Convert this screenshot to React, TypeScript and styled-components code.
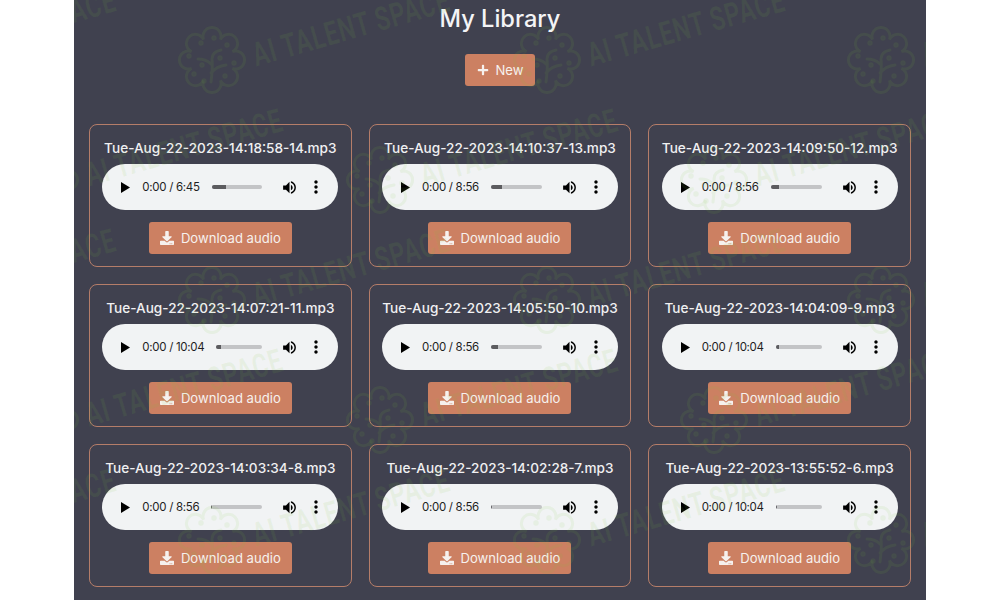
import React from "react";
import styled, { createGlobalStyle } from "styled-components";
import { FaDownload, FaPlus } from "react-icons/fa";
import { MdMoreVert, MdVolumeUp } from "react-icons/md";

const GlobalStyle = createGlobalStyle`
  html, body {
    margin: 0;
    height: 100%;
    overflow: hidden;
    background: #fff;
    font-family: Inter, "Liberation Sans", sans-serif;
  }
`;

const Page = styled.main`
  position: relative;
  box-sizing: border-box;
  width: 852px;
  height: 600px;
  margin: 0 auto;
  padding: 0 15px;
  background: #40414f;
  overflow: hidden;
`;

const Header = styled.header`
  display: flex;
  flex-direction: column;
  align-items: center;
  height: 124px;
`;

const Title = styled.h1`
  margin: 3px 0 0;
  font-size: 23.6px;
  line-height: 32px;
  font-weight: 500;
  color: #f4f4f6;
`;

const ActionButton = styled.button`
  display: flex;
  align-items: center;
  justify-content: center;
  gap: 7px;
  box-sizing: border-box;
  height: 32px;
  padding: 0 0 1px;
  border: none;
  border-radius: 3px;
  background: #cc8062;
  color: #f6f1ee;
  font-family: inherit;
  font-size: 13.1px;
  font-weight: 400;
`;

const NewButton = styled(ActionButton)`
  width: 70px;
  margin-top: 19px;
`;

const DownloadButton = styled(ActionButton)`
  width: 143px;
  margin-top: 12px;
`;

const Grid = styled.section`
  display: grid;
  grid-template-columns: repeat(3, 1fr);
  gap: 17px;
`;

const Card = styled.article`
  display: flex;
  flex-direction: column;
  align-items: center;
  box-sizing: border-box;
  height: 143px;
  padding-top: 13px;
  border: 1px solid #b57d69;
  border-radius: 8px;
`;

const FileName = styled.div`
  height: 20px;
  margin-bottom: 6px;
  font-size: 13.6px;
  line-height: 20px;
  font-weight: 500;
  color: #f0f0f2;
  white-space: nowrap;
`;

const Player = styled.div`
  display: flex;
  align-items: center;
  flex: none;
  box-sizing: border-box;
  width: 236px;
  height: 46px;
  padding-left: 19px;
  border-radius: 23px;
  background: #f1f3f4;
  color: #111;
`;

const PlayIcon = styled.svg`
  flex: none;
  width: 9px;
  height: 11px;
  margin-right: 12px;
  fill: #000;
`;

const Time = styled.span`
  flex: none;
  font-size: 11.5px;
  letter-spacing: -0.3px;
  color: #1e1e1e;
`;

const Track = styled.div`
  flex: 1;
  height: 4px;
  margin: 0 0 0 12px;
  border-radius: 2px;
  background: #c3c4c6;
  overflow: hidden;
`;

const Fill = styled.div<{ $w: number }>`
  width: ${(p) => p.$w}px;
  height: 100%;
  background: #5c5c5f;
`;

const Volume = styled(MdVolumeUp)`
  flex: none;
  width: 17px;
  height: 17px;
  margin-left: 19px;
  color: #000;
`;

const More = styled(MdMoreVert)`
  flex: none;
  width: 20px;
  height: 20px;
  margin: 0 12px 0 8px;
  color: #000;
`;

const WatermarkLayer = styled.div`
  position: absolute;
  inset: 0;
  pointer-events: none;
`;

const Mark = styled.div<{ $x: number; $y: number }>`
  position: absolute;
  left: ${(p) => p.$x}px;
  top: ${(p) => p.$y}px;
  width: 320px;
  height: 70px;
  color: rgba(125, 195, 60, 0.09);
`;

const MarkLogo = styled.svg`
  position: absolute;
  left: 0;
  top: 0;
  width: 68px;
  height: 68px;
  fill: none;
  stroke: currentColor;
  stroke-width: 3;
  stroke-linecap: round;
`;

const MarkText = styled.span`
  position: absolute;
  left: 75px;
  top: 12px;
  font-family: Roboto, sans-serif;
  font-size: 33px;
  line-height: 36px;
  font-weight: 700;
  letter-spacing: 1px;
  white-space: nowrap;
  transform-origin: 0 50%;
  transform: rotate(-16deg) scaleX(0.72);
`;

// cloud outline: eight round lobes around the middle of the logo
const lobePath = (() => {
  const n = 8;
  const pt = (i: number) => {
    const a = ((i - 0.5) * 2 * Math.PI) / n - Math.PI / 2;
    return `${(34 + 22 * Math.cos(a)).toFixed(1)} ${(34 + 22 * Math.sin(a)).toFixed(1)}`;
  };
  let d = `M${pt(0)}`;
  for (let i = 1; i <= n; i++) d += `A9 9 0 1 1 ${pt(i)}`;
  return d + "z";
})();

const BrainTree = () => (
  <MarkLogo viewBox="0 0 68 68">
    <path d={lobePath} />
    <path d="M33 56c1-8 2-16 1-23 0-5 4-8 9-9M33 38c-4-4-8-5-13-5M33 47c4-5 8-7 15-8" />
    <circle cx="23" cy="17" r="1.2" />
    <circle cx="36" cy="12" r="1.2" />
    <circle cx="49" cy="19" r="1.2" />
    <circle cx="11" cy="30" r="1.2" />
    <circle cx="42" cy="32" r="1.2" />
    <circle cx="24" cy="39" r="1.2" />
    <circle cx="56" cy="37" r="1.2" />
    <circle cx="16" cy="48" r="1.2" />
    <circle cx="47" cy="50" r="1.2" />
    <circle cx="26" cy="55" r="1.2" />
  </MarkLogo>
);

const tracks = [
  { name: "Tue-Aug-22-2023-14:18:58-14.mp3", time: "6:45", fill: 14 },
  { name: "Tue-Aug-22-2023-14:10:37-13.mp3", time: "8:56", fill: 11 },
  { name: "Tue-Aug-22-2023-14:09:50-12.mp3", time: "8:56", fill: 8 },
  { name: "Tue-Aug-22-2023-14:07:21-11.mp3", time: "10:04", fill: 5 },
  { name: "Tue-Aug-22-2023-14:05:50-10.mp3", time: "8:56", fill: 7 },
  { name: "Tue-Aug-22-2023-14:04:09-9.mp3", time: "10:04", fill: 3 },
  { name: "Tue-Aug-22-2023-14:03:34-8.mp3", time: "8:56", fill: 1 },
  { name: "Tue-Aug-22-2023-14:02:28-7.mp3", time: "8:56", fill: 1 },
  { name: "Tue-Aug-22-2023-13:55:52-6.mp3", time: "10:04", fill: 1 },
];

// staggered tile of the watermark, same spacing as the repeating background
const marks: { x: number; y: number }[] = [];
for (let row = 0; row < 6; row++) {
  for (let col = -1; col < 3; col++) {
    marks.push({ x: (row % 2 === 0 ? -63 : 104) + col * 334.5, y: -94 + row * 120 });
  }
}

export default function App() {
  return (
    <>
      <GlobalStyle />
      <Page>
        <Header>
          <Title>My Library</Title>
          <NewButton>
            <FaPlus size={12} />
            New
          </NewButton>
        </Header>
        <Grid>
          {tracks.map((t) => (
            <Card key={t.name}>
              <FileName>{t.name}</FileName>
              <Player>
                <PlayIcon viewBox="0 0 9 11">
                  <polygon points="0,0 9,5.5 0,11" />
                </PlayIcon>
                <Time>0:00 / {t.time}</Time>
                <Track>
                  <Fill $w={t.fill} />
                </Track>
                <Volume />
                <More />
              </Player>
              <DownloadButton>
                <FaDownload size={14} />
                Download audio
              </DownloadButton>
            </Card>
          ))}
        </Grid>
        <WatermarkLayer>
          {marks.map((m) => (
            <Mark key={`${m.x}-${m.y}`} $x={m.x} $y={m.y}>
              <BrainTree />
              <MarkText>AI TALENT SPACE</MarkText>
            </Mark>
          ))}
        </WatermarkLayer>
      </Page>
    </>
  );
}
